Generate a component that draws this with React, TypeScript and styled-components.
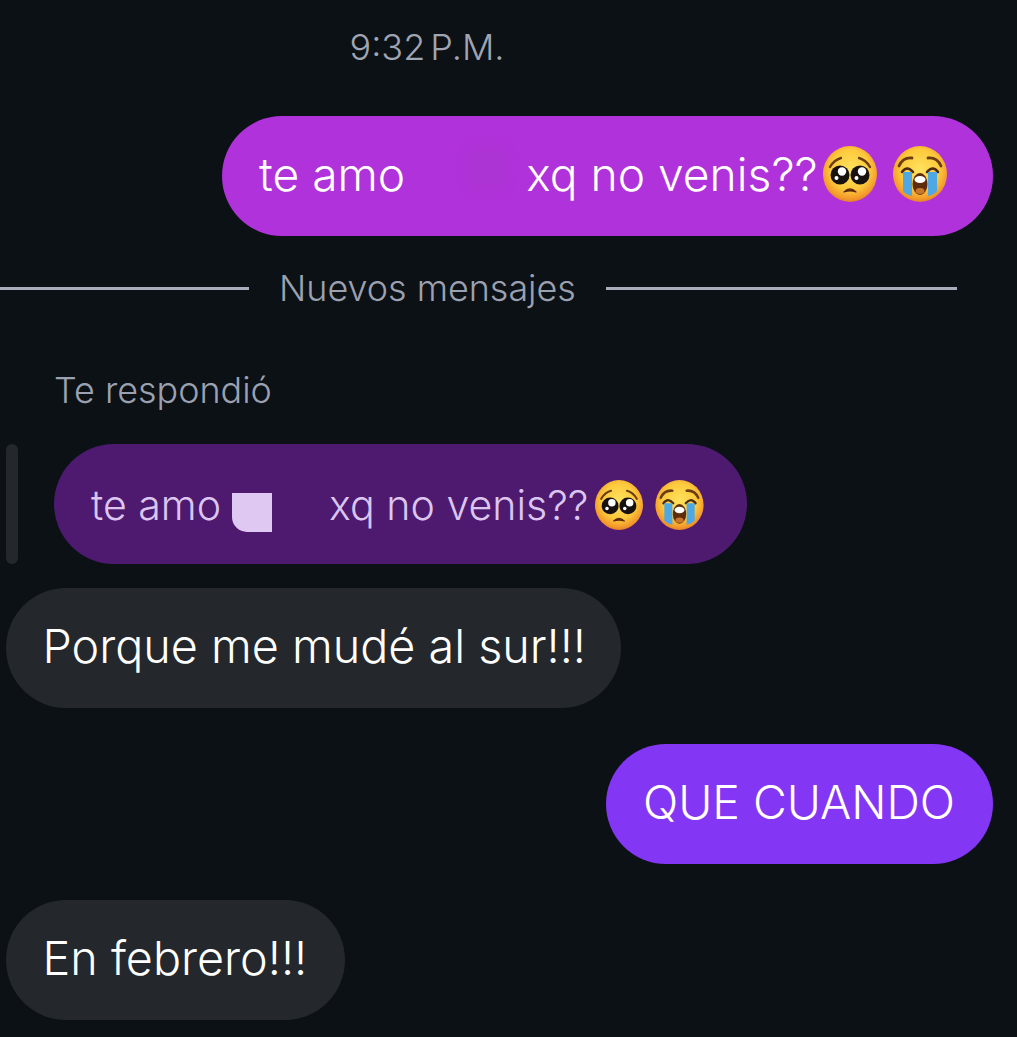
import React from "react";
import styled, { createGlobalStyle } from "styled-components";

const Global = createGlobalStyle`
  html, body { margin: 0; padding: 0; background: #0c1116; }
  body { font-family: Inter, "Liberation Sans", sans-serif; font-weight: 350; }
`;

const Page = styled.main`
  width: 1017px;
  height: 1037px;
  overflow: hidden;
  background: #0c1116;
  display: flex;
  flex-direction: column;
  padding: 0 24px 0 6px;
  box-sizing: border-box;
`;

const Time = styled.div`
  height: 116px;
  width: 842px;
  padding-top: 26px;
  box-sizing: border-box;
  text-align: center;
  font-size: 36px;
  line-height: 42px;
  color: #a0a5b3;
  word-spacing: -5px;
`;

const Row = styled.div<{ $mine?: boolean; $top?: number }>`
  display: flex;
  justify-content: ${(p) => (p.$mine ? "flex-end" : "flex-start")};
  margin-top: ${(p) => p.$top ?? 0}px;
`;

const Bubble = styled.div<{ $bg: string; $w: number; $size?: number; $left?: number }>`
  height: 120px;
  width: ${(p) => p.$w}px;
  box-sizing: border-box;
  border-radius: 60px;
  background: ${(p) => p.$bg};
  color: #fff;
  padding: 0 0 4px ${(p) => p.$left ?? 37}px;
  display: flex;
  align-items: center;
  font-size: ${(p) => p.$size ?? 46.7}px;
  white-space: nowrap;
`;

const Divider = styled.div`
  margin: 28px 0 0 -6px;
  height: 48px;
  display: flex;
  align-items: center;
`;

const Line = styled.span<{ $w: number }>`
  width: ${(p) => p.$w}px;
  height: 3px;
  background: #a9adbd;
`;

const DividerText = styled.span`
  margin: 0 31px 0 30px;
  width: 296px;
  font-size: 35.9px;
  color: #9ca1b1;
  white-space: nowrap;
`;

const ReplyLabel = styled.div`
  margin: 54px 0 0 48px;
  height: 48px;
  font-size: 35.9px;
  line-height: 48px;
  color: #9ca1b1;
`;

const ReplyRow = styled.div`
  margin-top: 30px;
  height: 120px;
  display: flex;
  gap: 36px;
`;

const ReplyBar = styled.div`
  width: 12px;
  height: 120px;
  border-radius: 6px;
  background: #24282c;
`;

const ReplyBubble = styled.div`
  width: 693px;
  height: 120px;
  box-sizing: border-box;
  padding: 2px 0 0 37px;
  border-radius: 60px;
  background: #4d1a70;
  color: #dcc6f0;
  display: flex;
  align-items: center;
  font-size: 41.1px;
  white-space: nowrap;
`;

const Gap = styled.span<{ $w: number }>`
  display: inline-block;
  flex: none;
  width: ${(p) => p.$w}px;
`;

const Smudge = styled.span`
  flex: none;
  margin: -12px 0 0 62px;
  width: 40px;
  height: 42px;
  border-radius: 12px;
  background: #ad34d4;
  filter: blur(4px);
`;

const Patch = styled.span`
  flex: none;
  margin: 14px 57px 0 11px;
  width: 40px;
  height: 39px;
  background: #dfc8f2;
  border-radius: 0 0 0 15px;
`;

type EmojiKind = "plead" | "cry";

const FaceSvg = styled.svg<{ $w: number; $h: number; $left: number }>`
  flex: none;
  width: ${(p) => p.$w}px;
  height: ${(p) => p.$h}px;
  margin-left: ${(p) => p.$left}px;
`;

function Emoji({ kind, id, w, h, left }: { kind: EmojiKind; id: string; w: number; h: number; left: number }) {
  return (
    <FaceSvg viewBox="0 0 54 56" $w={w} $h={h} $left={left}>
      <defs>
        <radialGradient id={id} cx="50%" cy="42%" r="58%">
          <stop offset="0%" stopColor="#ffe25e" />
          <stop offset="62%" stopColor="#fdc93c" />
          <stop offset="90%" stopColor="#f39a2a" />
          <stop offset="100%" stopColor="#e57f2c" />
        </radialGradient>
      </defs>
      <ellipse cx="27" cy="28" rx="27" ry="28" fill={`url(#${id})`} />
      {kind === "plead" ? (
        <>
          <path d="M7 21 Q11 14 18 12" stroke="#6b3d12" strokeWidth="2.4" fill="none" strokeLinecap="round" />
          <path d="M36 12 Q43 14 47 21" stroke="#6b3d12" strokeWidth="2.4" fill="none" strokeLinecap="round" />
          <circle cx="17" cy="29" r="9.5" fill="#17110f" />
          <circle cx="37" cy="29" r="9.5" fill="#17110f" />
          <circle cx="19" cy="25.5" r="4.2" fill="#fff" />
          <circle cx="39" cy="25.5" r="4.2" fill="#fff" />
          <circle cx="13.5" cy="32" r="2" fill="#fff" />
          <circle cx="33.5" cy="32" r="2" fill="#fff" />
          <path d="M21 46 Q27 40 33 46 Q27 44 21 46 Z" fill="#5d2a10" stroke="#5d2a10" strokeWidth="1.2" strokeLinejoin="round" />
        </>
      ) : (
        <>
          <path d="M6 20 Q10 11 19 12" stroke="#6b3d12" strokeWidth="2.8" fill="none" strokeLinecap="round" />
          <path d="M35 12 Q44 11 48 20" stroke="#6b3d12" strokeWidth="2.8" fill="none" strokeLinecap="round" />
          <path d="M9 26 Q14 19 20 26" stroke="#4c2a10" strokeWidth="2.6" fill="none" strokeLinecap="round" />
          <path d="M34 26 Q40 19 45 26" stroke="#4c2a10" strokeWidth="2.6" fill="none" strokeLinecap="round" />
          <path d="M10 26 H19 V50 Q13 49 10 45 Z" fill="#4fa8e4" />
          <path d="M35 26 H44 V45 Q41 49 35 50 Z" fill="#4fa8e4" />
          <ellipse cx="27" cy="38" rx="7.5" ry="11" fill="#5e2c0c" />
          <ellipse cx="27" cy="33.5" rx="5.5" ry="3.6" fill="#fff" />
          <ellipse cx="27" cy="45" rx="4.5" ry="3" fill="#c9772d" />
        </>
      )}
    </FaceSvg>
  );
}

export default function App() {
  return (
    <Page>
      <Global />
      <Time>9:32 P.M.</Time>
      <Row $mine>
        <Bubble $bg="#b032da" $w={771} $size={46.2}>
          te amo
          <Smudge />
          <Gap $w={19} />
          xq no venis??
          <Emoji kind="plead" id="a" w={56} h={56} left={4} />
          <Emoji kind="cry" id="b" w={54} h={56} left={15} />
        </Bubble>
      </Row>
      <Divider>
        <Line $w={249} />
        <DividerText>Nuevos mensajes</DividerText>
        <Line $w={351} />
      </Divider>
      <ReplyLabel>Te respondió</ReplyLabel>
      <ReplyRow>
        <ReplyBar />
        <ReplyBubble>
          te amo
          <Patch />
          xq no venis??
          <Emoji kind="plead" id="c" w={48} h={50} left={7} />
          <Emoji kind="cry" id="d" w={49} h={50} left={12} />
        </ReplyBubble>
      </ReplyRow>
      <Row $top={24}>
        <Bubble $bg="#24282c" $w={615} $left={36.5}>Porque me mudé al sur!!!</Bubble>
      </Row>
      <Row $mine $top={36}>
        <Bubble $bg="#8436f5" $w={387} $size={46.4}>QUE CUANDO</Bubble>
      </Row>
      <Row $top={36}>
        <Bubble $bg="#24282c" $w={339} $left={36.5}>En febrero!!!</Bubble>
      </Row>
    </Page>
  );
}
